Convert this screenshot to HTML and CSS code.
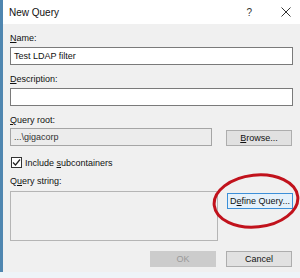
FILE: index.html
```html
<!DOCTYPE html>
<html lang="en">
<head>
    <meta charset="UTF-8">
    <meta name="viewport" content="width=device-width, initial-scale=1.0">
    <title>New Query</title>
    <link rel="stylesheet" href="styles.css">
</head>
<body>
    <div class="window">
        <div class="titlebar">
            <span class="title">New Query</span>
            <span class="help">?</span>
            <svg class="close" width="10" height="10" viewBox="0 0 10 10">
                <path d="M0.5 0.5 L9.5 9.5 M9.5 0.5 L0.5 9.5" stroke="#333" stroke-width="1" fill="none"/>
            </svg>
        </div>

        <div class="content">
            <div class="label"><u>N</u>ame:</div>
            <div class="input">Test LDAP filter</div>

            <div class="label gap"><u>D</u>escription:</div>
            <div class="input"></div>

            <div class="label gap"><u>Q</u>uery root:</div>
            <div class="row root-row">
                <div class="input disabled root">...\gigacorp</div>
                <div class="button"><u>B</u>rowse...</div>
            </div>

            <div class="check-row">
                <span class="checkbox">
                    <svg width="9" height="9" viewBox="0 0 9 9">
                        <path d="M1 4.5 L3.5 7 L8 1.5" stroke="#222" stroke-width="1.2" fill="none"/>
                    </svg>
                </span>
                <span>Include <u>s</u>ubcontainers</span>
            </div>

            <div class="label qs-label">Q<u>u</u>ery string:</div>
            <div class="row">
                <div class="textarea"></div>
                <div class="button focused">D<u>e</u>fine Query...</div>
            </div>

            <div class="footer">
                <div class="button disabled-btn">OK</div>
                <div class="button">Cancel</div>
            </div>
        </div>

        <svg class="marker" width="100" height="66" viewBox="0 0 100 66">
            <ellipse cx="49" cy="33" rx="42" ry="26" fill="none" stroke="#c1121c" stroke-width="3" transform="rotate(-6 49 33)"/>
        </svg>
    </div>
</body>
</html>
```

FILE: styles.css
```css
body {
    margin: 0;
    background-color: #eef4f8;
    font-family: "Liberation Sans", Arial, sans-serif;
    font-size: 9px;
    color: #111;
}
.window {
    position: relative;
    width: 297px;
    height: 272px;
    border-left: 3px solid #4f86b0;
    background-color: #f0f0f0;
}
.titlebar {
    display: flex;
    align-items: center;
    height: 24px;
    background-color: #fff;
    padding-left: 6px;
}
.title {
    font-size: 10px;
    flex: 1;
}
.help {
    font-size: 10px;
    color: #333;
    margin-right: 29px;
}
.close {
    margin-right: 9px;
}
.content {
    padding: 0 7px 0 7px;
}
.label {
    height: 11px;
    line-height: 11px;
    margin-top: 9px;
}
.input {
    box-sizing: border-box;
    height: 18px;
    margin-top: 3px;
    border: 1px solid #7a7a7a;
    background-color: #fff;
    padding: 0 3px;
    line-height: 16px;
}
.row {
    display: flex;
    justify-content: space-between;
    align-items: flex-start;
}
.root-row {
    margin-top: 2px;
}
.input.disabled {
    background-color: #ececec;
    border-color: #a5a5a5;
    color: #333;
    margin-top: 0;
}
.root {
    width: 202px;
}
.button {
    box-sizing: border-box;
    width: 66px;
    height: 16px;
    line-height: 14px;
    text-align: center;
    border: 1px solid #adadad;
    background-color: #e1e1e1;
}
.root-row .button {
    margin-top: 2px;
    margin-right: 1px;
}
.check-row {
    display: flex;
    align-items: center;
    gap: 3px;
    height: 13px;
    margin-top: 10px;
    padding-left: 1px;
}
.checkbox {
    box-sizing: border-box;
    display: flex;
    align-items: center;
    justify-content: center;
    width: 11px;
    height: 11px;
    border: 1px solid #333;
    background-color: #fff;
}
.qs-label {
    margin-top: 7px;
}
.qs-label + .row {
    margin-top: 4px;
}
.textarea {
    box-sizing: border-box;
    width: 208px;
    height: 50px;
    border: 1px solid #b5b5b5;
    background-color: #f0f0f0;
}
.button.focused {
    margin-top: 2px;
    background-color: #e5f1fb;
    border-color: #3c8fd8;
}
.footer {
    display: flex;
    justify-content: flex-end;
    gap: 10px;
    margin-top: 10px;
    padding-right: 1px;
}
.disabled-btn {
    background-color: #cccccc;
    border-color: #cccccc;
    color: #9a9a9a;
}
.marker {
    position: absolute;
    left: 204px;
    top: 168px;
}
```
